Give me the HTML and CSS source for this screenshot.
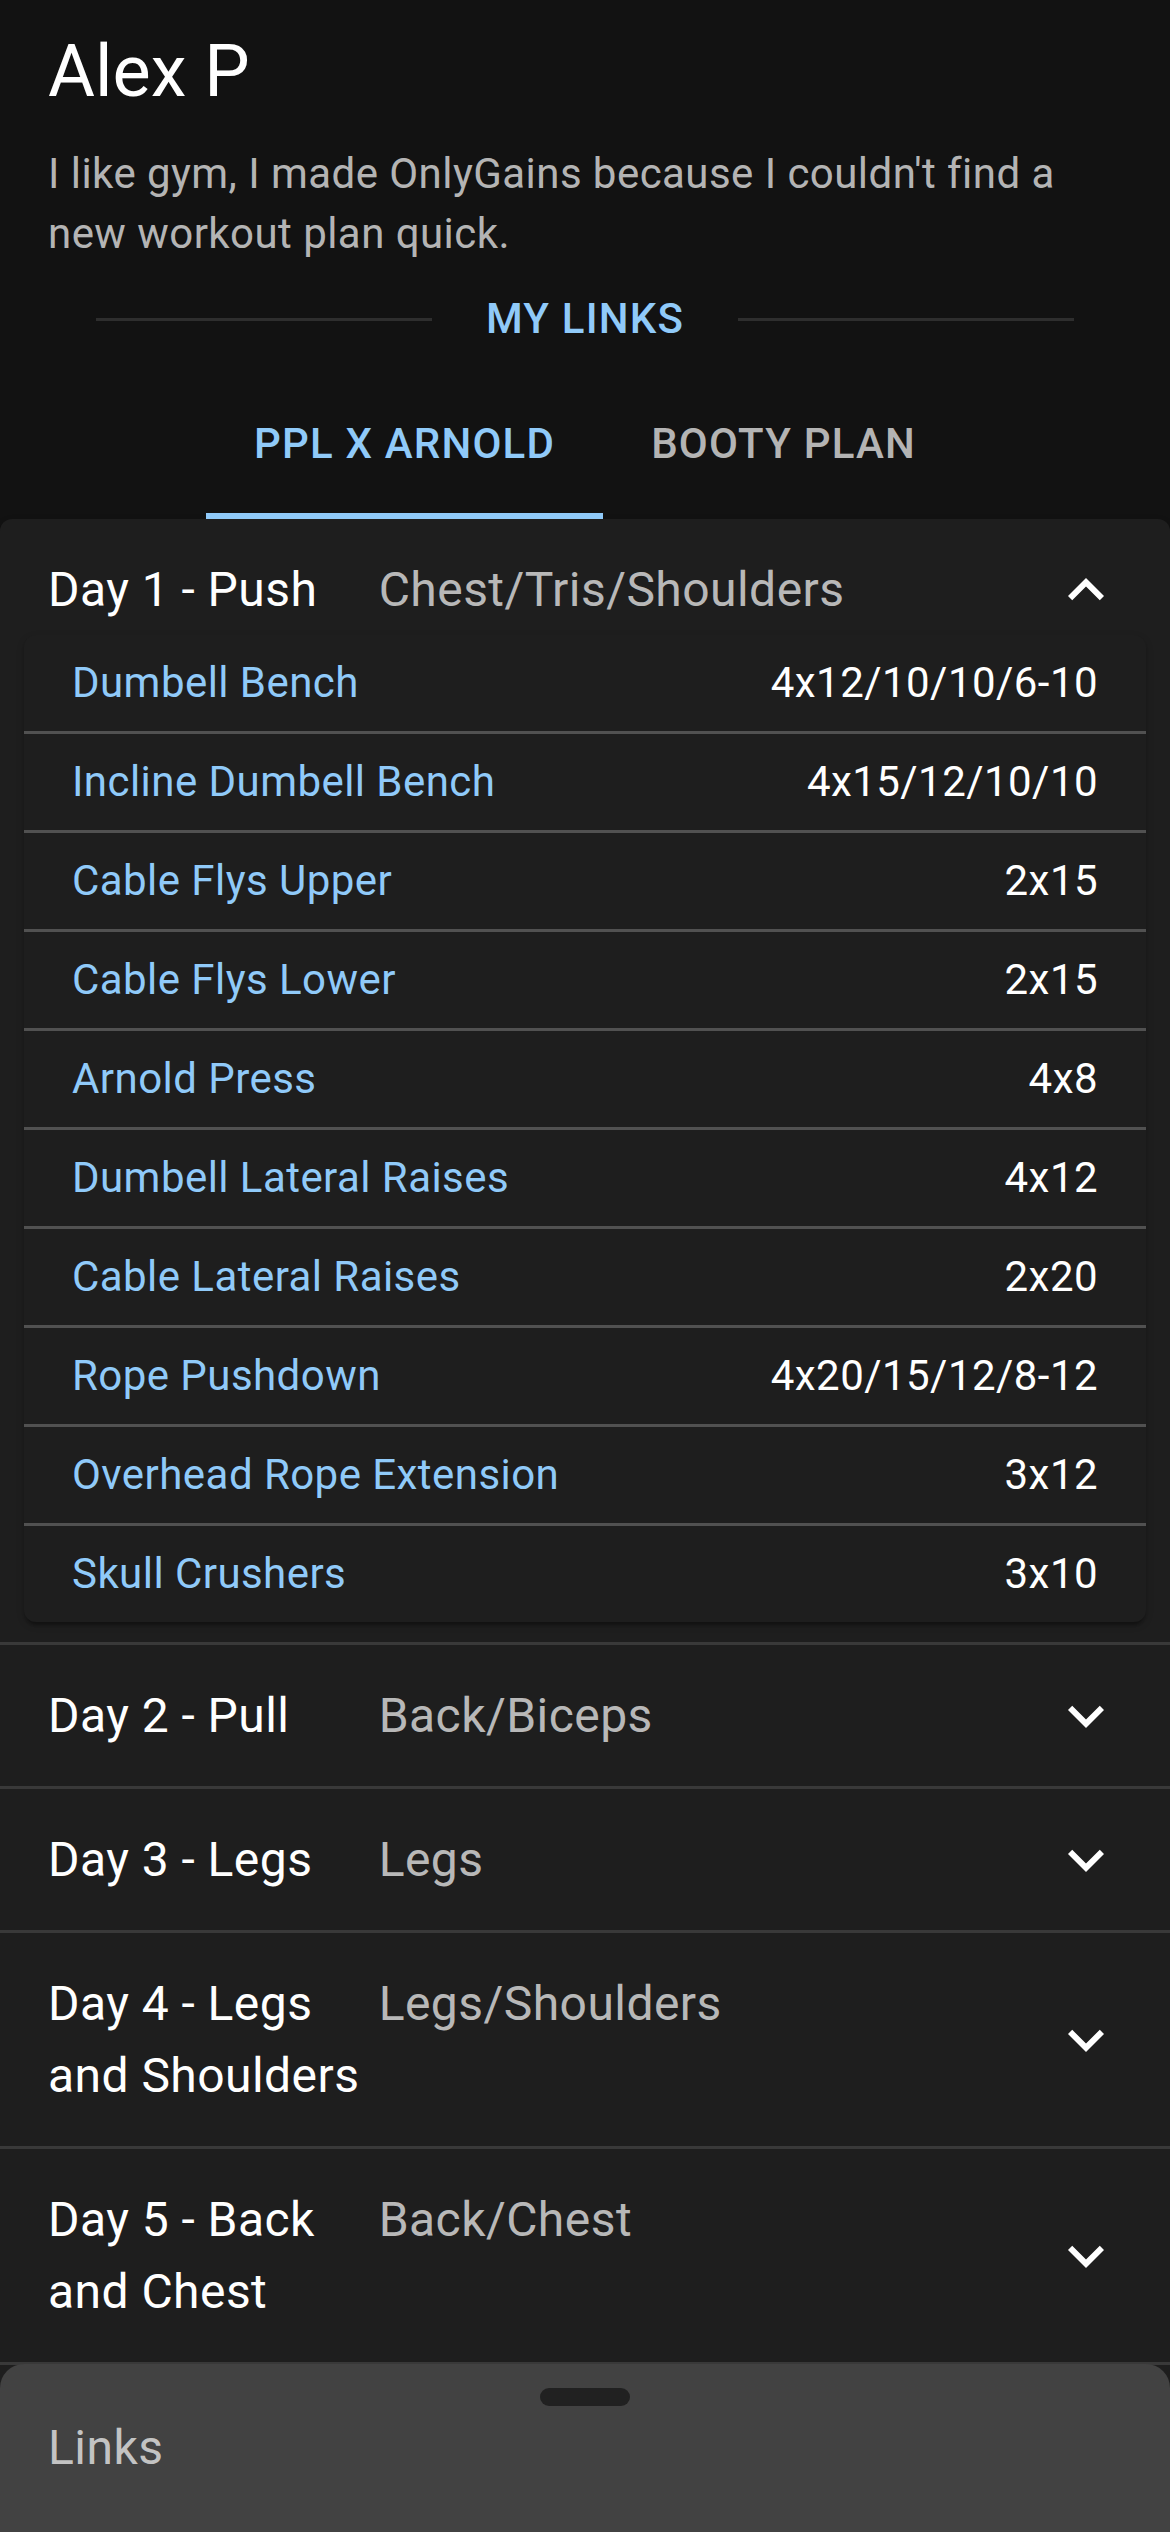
FILE: index.html
```html
<!DOCTYPE html>
<html lang="en">
<head>
<meta charset="utf-8">
<title>Alex P - OnlyGains</title>
<link rel="stylesheet" href="styles.css">
</head>
<body>
<header class="header">
  <h1 class="name">Alex P</h1>
  <p class="bio">I like gym, I made OnlyGains because I couldn't find a new workout plan quick.</p>
  <div class="links-divider">
    <span class="line"></span>
    <span class="links-label">My Links</span>
    <span class="line"></span>
  </div>
</header>
<nav class="tabs">
  <div class="tab active">PPL X Arnold</div>
  <div class="tab">Booty Plan</div>
</nav>
<main class="plan">
  <section class="day expanded">
    <div class="summary">
      <div class="summary-content">
        <span class="day-title">Day 1 - Push</span>
        <span class="day-focus">Chest/Tris/Shoulders</span>
      </div>
      <svg class="chev" viewBox="0 0 24 24" width="72" height="72"><path d="M12 8l-6 6 1.41 1.41L12 10.83l4.59 4.58L18 14z"/></svg>
    </div>
    <div class="details">
      <div class="table-card">
        <div class="row"><span class="ex">Dumbell Bench</span><span class="reps">4x12/10/10/6-10</span></div>
        <div class="row"><span class="ex">Incline Dumbell Bench</span><span class="reps">4x15/12/10/10</span></div>
        <div class="row"><span class="ex">Cable Flys Upper</span><span class="reps">2x15</span></div>
        <div class="row"><span class="ex">Cable Flys Lower</span><span class="reps">2x15</span></div>
        <div class="row"><span class="ex">Arnold Press</span><span class="reps">4x8</span></div>
        <div class="row"><span class="ex">Dumbell Lateral Raises</span><span class="reps">4x12</span></div>
        <div class="row"><span class="ex">Cable Lateral Raises</span><span class="reps">2x20</span></div>
        <div class="row"><span class="ex">Rope Pushdown</span><span class="reps">4x20/15/12/8-12</span></div>
        <div class="row"><span class="ex">Overhead Rope Extension</span><span class="reps">3x12</span></div>
        <div class="row"><span class="ex">Skull Crushers</span><span class="reps">3x10</span></div>
      </div>
    </div>
  </section>
  <section class="day">
    <div class="summary">
      <div class="summary-content">
        <span class="day-title">Day 2 - Pull</span>
        <span class="day-focus">Back/Biceps</span>
      </div>
      <svg class="chev" viewBox="0 0 24 24" width="72" height="72"><path d="M16.59 8.59 12 13.17 7.41 8.59 6 10l6 6 6-6z"/></svg>
    </div>
  </section>
  <section class="day">
    <div class="summary">
      <div class="summary-content">
        <span class="day-title">Day 3 - Legs</span>
        <span class="day-focus">Legs</span>
      </div>
      <svg class="chev" viewBox="0 0 24 24" width="72" height="72"><path d="M16.59 8.59 12 13.17 7.41 8.59 6 10l6 6 6-6z"/></svg>
    </div>
  </section>
  <section class="day">
    <div class="summary">
      <div class="summary-content">
        <span class="day-title">Day 4 - Legs and Shoulders</span>
        <span class="day-focus">Legs/Shoulders</span>
      </div>
      <svg class="chev" viewBox="0 0 24 24" width="72" height="72"><path d="M16.59 8.59 12 13.17 7.41 8.59 6 10l6 6 6-6z"/></svg>
    </div>
  </section>
  <section class="day last">
    <div class="summary">
      <div class="summary-content">
        <span class="day-title">Day 5 - Back and Chest</span>
        <span class="day-focus">Back/Chest</span>
      </div>
      <svg class="chev" viewBox="0 0 24 24" width="72" height="72"><path d="M16.59 8.59 12 13.17 7.41 8.59 6 10l6 6 6-6z"/></svg>
    </div>
  </section>
</main>
<aside class="sheet">
  <span class="puller"></span>
  <div class="sheet-title">Links</div>
</aside>
</body>
</html>
```
FILE: styles.css
```css
* { box-sizing: border-box; }
html, body {
  margin: 0;
  padding: 0;
  background: #121212;
  color: #fff;
  font-family: Roboto, "Noto Sans", "Liberation Sans", sans-serif;
}
body { min-height: 2532px; }

.header { padding: 24px 48px 0; }
.name {
  margin: 0;
  font-size: 72px;
  line-height: 96px;
  font-weight: 400;
  color: #fff;
}
.bio {
  margin: 24px 0 0;
  font-size: 42px;
  line-height: 60px;
  letter-spacing: 0.01071em;
  color: rgba(255,255,255,0.7);
}
.links-divider {
  margin: 25px 48px 0;
  display: flex;
  align-items: center;
  height: 60px;
}
.links-divider .line {
  flex: 1;
  height: 3px;
  background: rgba(255,255,255,0.12);
}
.links-label {
  padding: 0 54px;
  font-size: 42px;
  font-weight: 500;
  line-height: 60px;
  text-transform: uppercase;
  letter-spacing: 0.02857em;
  color: #90caf9;
}

.tabs {
  margin-top: 26px;
  display: flex;
  justify-content: center;
}
.tab {
  height: 144px;
  min-width: 270px;
  padding: 0 48px;
  display: flex;
  align-items: center;
  justify-content: center;
  font-size: 42px;
  font-weight: 500;
  line-height: 1.25;
  text-transform: uppercase;
  letter-spacing: 0.02857em;
  color: rgba(255,255,255,0.7);
  border-bottom: 6px solid transparent;
}
.tab.active {
  color: #90caf9;
  border-bottom-color: #90caf9;
}

.plan {
  background: #1e1e1e;
  border-radius: 12px 12px 0 0;
  box-shadow: 0 6px 3px -3px rgba(0,0,0,.2), 0 3px 3px 0 rgba(0,0,0,.14), 0 3px 9px 0 rgba(0,0,0,.12);
  min-height: 2013px;
}
.day { border-top: 3px solid #393939; }
.day.expanded { border-top: 0; }
.day.last { border-bottom: 3px solid #393939; }

.summary {
  display: flex;
  align-items: center;
  padding: 35px 48px 34px;
}
.day.expanded .summary { padding: 35px 48px 9px; }
.summary-content {
  flex: 1;
  display: flex;
  font-size: 48px;
  line-height: 72px;
  letter-spacing: 0.00938em;
}
.day-title {
  width: 33%;
  flex-shrink: 0;
  color: #fff;
}
.day-focus { color: rgba(255,255,255,0.7); }
.chev {
  flex-shrink: 0;
  fill: #fff;
}

.details { padding: 0 24px 20px; }
.table-card {
  background: #1e1e1e;
  border-radius: 12px;
  box-shadow: 0 6px 3px -3px rgba(0,0,0,.2), 0 3px 3px 0 rgba(0,0,0,.14), 0 3px 9px 0 rgba(0,0,0,.12);
}
.row {
  display: flex;
  justify-content: space-between;
  padding: 18px 48px;
  font-size: 42px;
  line-height: 60px;
  letter-spacing: 0.01071em;
  border-bottom: 3px solid #515151;
}
.row:last-child { border-bottom: 0; }
.ex { color: #90caf9; }
.reps { color: #fff; }

.sheet {
  position: fixed;
  left: 0;
  right: 0;
  bottom: 0;
  height: 168px;
  background: #424242;
  border-radius: 24px 24px 0 0;
}
.puller {
  position: absolute;
  top: 24px;
  left: calc(50% - 45px);
  width: 90px;
  height: 18px;
  border-radius: 9px;
  background: #212121;
}
.sheet-title {
  padding: 48px;
  font-size: 48px;
  line-height: 72px;
  letter-spacing: 0.00938em;
  color: rgba(255,255,255,0.7);
}
```
